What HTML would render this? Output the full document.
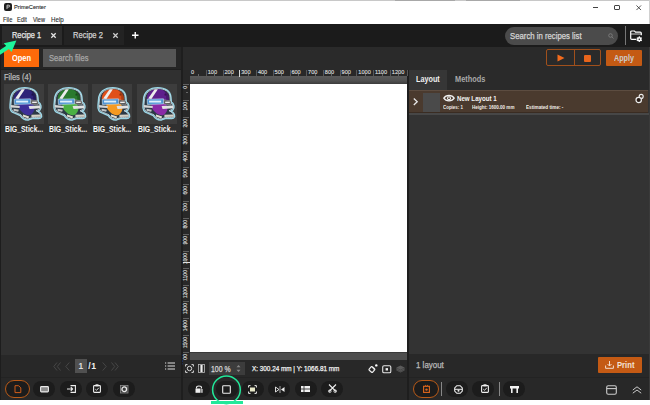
<!DOCTYPE html>
<html><head><meta charset="utf-8">
<style>
*{margin:0;padding:0;box-sizing:border-box}
html,body{width:650px;height:405px;overflow:hidden;background:#fff}
body{position:relative;font-family:"Liberation Sans",sans-serif;color:#ddd}
.a{position:absolute}
.t{position:absolute;white-space:nowrap;line-height:1}
.sb{-webkit-text-stroke:0.25px currentColor}
.rl{-webkit-text-stroke:0.15px #ddd;font-size:5.6px;color:#d8d8d8;line-height:1;white-space:nowrap}
.rv{-webkit-text-stroke:0.15px #ddd;font-size:5.1px;color:#d8d8d8;line-height:1;white-space:nowrap;writing-mode:vertical-rl;transform:rotate(180deg)}
.pill{position:absolute;width:22px;height:16px;border-radius:8px;background:#1c1c1c}
.card{position:absolute;top:84.2px;width:40px;height:39.4px;background:#3d3d3d}
.cl{position:absolute;top:125.6px;font-size:8.2px;font-weight:bold;color:#f6f6f6;white-space:nowrap;line-height:1}
svg{position:absolute;overflow:visible}
</style></head><body>
<svg width="0" height="0" style="position:absolute">
<defs>
<symbol id="stk" viewBox="0 0 40 40">
<g transform="translate(2.3 0.5) scale(0.93 0.97)">
<path d="M4.5 16 C4.5 8 11 3.2 20 3.2 C28 3.2 33.5 7 34 13 L34.5 18 C37.5 20 38.5 24 36 26.5 L34 27.5 C38 29 39 33 37 34.5 C34 35.5 31 35 28 35 L24 36.5 C20 37 17 35 15 32 L9 29.5 C5 28.5 3.5 25 4 21 Z" fill="#2c3a46" stroke="#9ad6e6" stroke-width="1.5"/>
<path d="M5.6 16 C5.6 9 11.5 4.3 20 4.3 C27.5 4.3 32.8 7.5 33 13 L33.5 18.6 C36.5 20.5 37.3 24 35 25.8 L32 27 C36.5 29 37.8 32.5 36.5 33.6 C33.5 34.3 31 34 28 34 L24 35.4 C20.5 35.8 17.5 34.3 15.8 31.2 L9.5 28.6 C6 27.6 4.8 24.5 5.1 21 Z" fill="none" stroke="#e8f4f8" stroke-width="0.7"/>
<path d="M8 14.5 C8 8 13 4.8 20.5 4.8 C27 4.8 32 8.5 32 15 L31 17 L24 17 L10 16.5 Z" style="fill:var(--h)"/>
<path d="M26 5.8 C30 7.2 32 10 32 15 L31 17 L28.5 17 C29.5 13 29 9 26 5.8 Z" fill="#000" opacity="0.22"/>
<circle cx="28" cy="10.5" r="1.1" fill="#000" opacity="0.35"/>
<path d="M13 19.5 C16 18 24 18 28.5 20 C31 23 30.5 27 28.5 29 C27 32 22.5 32.5 19.5 30.5 C16.5 28.5 13 25 13 22 Z" style="fill:var(--f)"/>
<path d="M9.5 14.5 L16.5 5 L20 4.8 L13 15 Z" fill="#ececec"/>
<path d="M8.5 15.2 L26 14.8 L26.3 20 L8.7 20.6 Z" fill="#4a92d4" stroke="#d8ecf6" stroke-width="0.6"/>
<rect x="10.5" y="16.6" width="13" height="2" fill="#dff0fa"/>
<path d="M26.5 15.8 L34 17 L34 21 L26.5 20.2 Z" fill="#4a4a4a" stroke="#ddd" stroke-width="0.4"/>
<rect x="27.8" y="17.6" width="5" height="1.6" fill="#eee"/>
<path d="M24 22.2 L36 21.6 L36.8 24.6 L25 25.2 Z" fill="#e2e2e2"/>
<path d="M5 21.2 L14.5 22.2 L14.3 24.2 L5 23.6 Z" fill="#d6d6d6"/>
<path d="M7.8 25 L13.5 26 L12.8 28 L7.8 27 Z" fill="#c4c4c4"/>
<path d="M18 30.8 L24.5 33 L23.8 35 L17.8 33 Z" fill="#e2ddd0"/>
<path d="M27 31.2 L36.8 31 L36.8 33.2 L27 33.6 Z" fill="#d4d0c4"/>
</g>
</symbol>
</defs>
</svg>

<!-- title bar -->
<div class="a" style="left:0;top:0;width:650px;height:24px;background:#fff;border-top:1px solid #c8c8c8"></div>
<div class="a" style="left:395px;top:0;width:60px;height:1px;background:#a8a8a8"></div>
<div class="a" style="left:466px;top:0;width:54px;height:1px;background:#a8a8a8"></div>
<div class="a" style="left:4px;top:3px;width:8px;height:8px;background:#1e1e1e;border-radius:2px"></div>
<svg style="left:5px;top:4px" width="6" height="6" viewBox="0 0 6 6"><path d="M2 5 L2 1.2 L4 1.2 C5 1.2 5 3 4 3 L2 3" fill="none" stroke="#ddd" stroke-width="0.8"/></svg>
<div class="t" id="title" style="left:13.55px;top:4.8px;font-size:5.9px;color:#1a1a1a;-webkit-text-stroke:0.1px #1a1a1a;transform:scaleX(0.965);transform-origin:0 0">PrimeCenter</div>
<div class="t" id="mf" style="left:2.84px;top:16.5px;font-size:6.3px;color:#2a2a2a;-webkit-text-stroke:0.1px #2a2a2a;transform:scaleX(0.925);transform-origin:0 0">File</div>
<div class="t" id="me" style="left:17.05px;top:16.5px;font-size:6.3px;color:#2a2a2a;-webkit-text-stroke:0.1px #2a2a2a;transform:scaleX(0.915);transform-origin:0 0">Edit</div>
<div class="t" id="mv" style="left:33.00px;top:16.5px;font-size:6.3px;color:#2a2a2a;-webkit-text-stroke:0.1px #2a2a2a;transform:scaleX(0.881);transform-origin:0 0">View</div>
<div class="t" id="mh" style="left:50.52px;top:16.5px;font-size:6.3px;color:#2a2a2a;-webkit-text-stroke:0.1px #2a2a2a;transform:scaleX(0.983);transform-origin:0 0">Help</div>
<div class="a" style="left:593px;top:7px;width:5px;height:1px;background:#444"></div>
<div class="a" style="left:614px;top:5px;width:6px;height:5px;border:1px solid #444;border-radius:1px"></div>
<svg style="left:636px;top:4.5px" width="5.5" height="5.5" viewBox="0 0 6 6"><path d="M0.5 0.5 L5.5 5.5 M5.5 0.5 L0.5 5.5" stroke="#333" stroke-width="0.9"/></svg>
<div class="a" style="left:649px;top:0;width:1px;height:24px;background:#d0d0d0"></div>

<!-- dark main -->
<div class="a" style="left:0;top:24px;width:650px;height:376px;background:#1b1b1b"></div>

<!-- tabs -->
<div class="a" style="left:2px;top:26.2px;width:60px;height:18.6px;background:#2c2c2c"></div>
<div class="t sb" id="tab1" style="left:12.12px;top:32px;font-size:8.2px;color:#e8e8e8;transform:scaleX(0.898);transform-origin:0 0">Recipe 1</div>
<svg style="left:50.5px;top:33px" width="5" height="5" viewBox="0 0 5 5"><path d="M0.3 0.3 L4.7 4.7 M4.7 0.3 L0.3 4.7" stroke="#e6e6e6" stroke-width="1.25"/></svg>
<div class="a" style="left:64px;top:26.2px;width:60px;height:18.6px;background:#232323"></div>
<div class="t sb" id="tab2" style="left:73.41px;top:32px;font-size:8.2px;color:#cfcfcf;transform:scaleX(0.924);transform-origin:0 0">Recipe 2</div>
<svg style="left:112.5px;top:33px" width="5" height="5" viewBox="0 0 5 5"><path d="M0.3 0.3 L4.7 4.7 M4.7 0.3 L0.3 4.7" stroke="#d0d0d0" stroke-width="1.25"/></svg>
<svg style="left:132.2px;top:32px" width="6.5" height="6.5" viewBox="0 0 6.5 6.5"><path d="M3.25 0 V6.5 M0 3.25 H6.5" stroke="#fff" stroke-width="1.4"/></svg>

<div class="a" style="left:505px;top:27px;width:113px;height:18px;background:#4b4b4b;border-radius:9px"></div>
<div class="t sb" id="srch" style="left:510.36px;top:31.5px;font-size:8.3px;color:#d5d5d5;transform:scaleX(0.935);transform-origin:0 0">Search in recipes list</div>
<svg style="left:608px;top:33px" width="6" height="6" viewBox="0 0 6 6"><circle cx="2.5" cy="2.5" r="1.8" fill="none" stroke="#888" stroke-width="0.7"/><path d="M3.8 3.8 L5.5 5.5" stroke="#888" stroke-width="0.7"/></svg>
<div class="a" style="left:624.5px;top:26px;width:1px;height:19px;background:#777"></div>
<svg style="left:629px;top:30px" width="14" height="12" viewBox="0 0 14 12"><path d="M7.5 9.3 H2.8 Q1.7 9.3 1.7 8.2 V2 Q1.7 1 2.7 1 H5.5 L6.5 2.1 H11.2 Q12.3 2.1 12.3 3.2 V5.2" fill="none" stroke="#fff" stroke-width="1.2"/><path d="M2 4 H12" stroke="#fff" stroke-width="0.8"/><circle cx="10.3" cy="9.2" r="2.2" fill="#fff"/><path d="M10.3 6.3 V12.1 M7.8 7.75 L12.8 10.65 M7.8 10.65 L12.8 7.75" stroke="#fff" stroke-width="1.1"/><circle cx="10.3" cy="9.2" r="0.8" fill="#1b1b1b"/></svg>

<!-- left panel -->
<div class="a" style="left:0;top:46.5px;width:1px;height:353.5px;background:#1d1d1d"></div>
<div class="a" style="left:1px;top:46.5px;width:179.5px;height:23.5px;background:#252525;border-bottom:1px solid #1f1f1f"></div>
<div class="a" style="left:4px;top:49px;width:35px;height:18px;background:#fd6a0a"></div>
<div class="t" id="open" style="left:11.77px;top:55px;font-size:8.2px;font-weight:bold;color:#fff;transform:scaleX(0.911);transform-origin:0 0">Open</div>
<div class="a" style="left:43px;top:49px;width:133px;height:18px;background:#555"></div>
<div class="t sb" id="sfiles" style="left:48.76px;top:55.3px;font-size:8.2px;color:#a8a8a8;transform:scaleX(0.921);transform-origin:0 0">Search files</div>
<div class="a" style="left:1px;top:70px;width:179.5px;height:285px;background:#303030"></div>
<div class="t sb" id="files" style="left:4.01px;top:74px;font-size:8.2px;color:#b8b8b8;transform:scaleX(0.918);transform-origin:0 0">Files (4)</div>

<div class="card" style="left:4px"></div>
<svg style="left:4px;top:84px;--h:#2e2378;--f:#3d2f98" width="40" height="40"><use href="#stk"/></svg>
<div class="cl" id="c1" style="left:5px;transform:scaleX(0.839);transform-origin:0 0">BIG_Stick...</div>
<div class="card" style="left:48.2px"></div>
<svg style="left:48.2px;top:84px;--h:#2a7a2e;--f:#4bb043" width="40" height="40"><use href="#stk"/></svg>
<div class="cl" id="c2" style="left:49.2px;transform:scaleX(0.839);transform-origin:0 0">BIG_Stick...</div>
<div class="card" style="left:92.4px"></div>
<svg style="left:92.4px;top:84px;--h:#e0501a;--f:#f59a22" width="40" height="40"><use href="#stk"/></svg>
<div class="cl" id="c3" style="left:93.4px;transform:scaleX(0.839);transform-origin:0 0">BIG_Stick...</div>
<div class="card" style="left:136.6px"></div>
<svg style="left:136.6px;top:84px;--h:#5e1f8c;--f:#8a2aa6" width="40" height="40"><use href="#stk"/></svg>
<div class="cl" id="c4" style="left:137.6px;transform:scaleX(0.839);transform-origin:0 0">BIG_Stick...</div>

<div class="a" style="left:1px;top:355px;width:179.5px;height:21.5px;background:#282828"></div>
<svg style="left:53px;top:361.8px" width="8" height="9" viewBox="0 0 8 9"><path d="M4 0.5 L0.8 4.5 L4 8.5 M7.5 0.5 L4.3 4.5 L7.5 8.5" fill="none" stroke="#4a4a4a" stroke-width="0.9"/></svg>
<svg style="left:65.3px;top:361.8px" width="5" height="9" viewBox="0 0 5 9"><path d="M4.3 0.5 L0.8 4.5 L4.3 8.5" fill="none" stroke="#4a4a4a" stroke-width="0.9"/></svg>
<div class="a" style="left:75.2px;top:359px;width:12.3px;height:13.7px;background:#505050"></div>
<div class="t" style="left:78.6px;top:362.3px;font-size:8.3px;color:#dedede;font-weight:bold">1</div>
<div class="t" style="left:88.3px;top:362px;font-size:8.6px;color:#f0f0f0;font-weight:bold;letter-spacing:0.6px">/1</div>
<svg style="left:102px;top:361.8px" width="5" height="9" viewBox="0 0 5 9"><path d="M0.7 0.5 L4.2 4.5 L0.7 8.5" fill="none" stroke="#4a4a4a" stroke-width="0.9"/></svg>
<svg style="left:111.3px;top:361.8px" width="8" height="9" viewBox="0 0 8 9"><path d="M0.5 0.5 L3.7 4.5 L0.5 8.5 M4 0.5 L7.2 4.5 L4 8.5" fill="none" stroke="#4a4a4a" stroke-width="0.9"/></svg>
<svg style="left:165px;top:362px" width="10" height="8" viewBox="0 0 10 8"><path d="M0 1 H1.2 M2.6 1 H10 M0 4 H1.2 M2.6 4 H10 M0 7 H1.2 M2.6 7 H10" stroke="#e0e0e0" stroke-width="1"/></svg>

<div class="a" style="left:1px;top:376.5px;width:179.5px;height:23.5px;background:#282828;border-top:1px solid #232323"></div>
<!-- left bottom toolbar pills -->
<div class="pill" style="left:4.8px;top:380.3px;width:25.3px;height:17.7px;border-radius:9px;border:1.8px solid #b85a18;background:#1c1c1c"></div>
<svg style="left:14px;top:385px" width="8" height="8" viewBox="0 0 8 8"><path d="M1 0.7 H4.6 L6.8 2.9 V7.6 H1 Z" fill="none" stroke="#d8601a" stroke-width="0.95"/></svg>
<div class="pill" style="left:33.4px;top:381px"></div>
<svg style="left:40px;top:385.8px" width="9" height="6.5" viewBox="0 0 9 6.5"><rect x="0.6" y="0.6" width="7.8" height="5.3" rx="0.8" fill="#8a8a8a" stroke="#eaeaea" stroke-width="1.1"/></svg>
<div class="pill" style="left:59.6px;top:381px"></div>
<svg style="left:67px;top:385px" width="9" height="8" viewBox="0 0 9 8"><path d="M3.5 0.6 H8.4 V7.4 H3.5" fill="none" stroke="#eee" stroke-width="1.1"/><path d="M0 4 H5.5 M3.8 2.2 L5.6 4 L3.8 5.8" fill="none" stroke="#eee" stroke-width="1.1"/></svg>
<div class="pill" style="left:86px;top:381px"></div>
<svg style="left:93px;top:384px" width="8" height="9" viewBox="0 0 8 9"><rect x="0.6" y="1.6" width="6.8" height="6.8" fill="none" stroke="#eee" stroke-width="1.1" rx="0.8"/><rect x="2.5" y="0.3" width="3" height="2" fill="#eee"/><path d="M2.3 5.2 L3.6 6.3 L5.8 3.8" fill="none" stroke="#eee" stroke-width="0.9"/></svg>
<div class="pill" style="left:112.6px;top:381px"></div>
<svg style="left:119.8px;top:384.8px" width="8.5" height="8.5" viewBox="0 0 8.5 8.5"><rect x="0.5" y="0.5" width="7.5" height="7.5" fill="#3a3a3a" stroke="#8a8a8a" stroke-width="0.8"/><circle cx="4.25" cy="4.25" r="2.3" fill="none" stroke="#e8e8e8" stroke-width="1.3"/></svg>

<!-- splitters -->
<div class="a" style="left:180.5px;top:46.5px;width:2px;height:353.5px;background:#1e1e1e"></div>
<div class="a" style="left:407px;top:69.5px;width:2px;height:330.5px;background:#1e1e1e"></div>

<!-- center -->
<div class="a" style="left:182.5px;top:46.5px;width:466px;height:23px;background:#2a2a2a"></div>
<div class="a" style="left:182.5px;top:69.5px;width:224.5px;height:6.5px;background:#282828"></div>
<div class="a" style="left:182.5px;top:76px;width:7px;height:283.5px;background:#282828"></div>
<div class="a" style="left:189.5px;top:76px;width:217.5px;height:283.5px;background:#525252"></div>
<div class="a" style="left:189.5px;top:76px;width:217.5px;height:8px;background:linear-gradient(#5a5a5a,#505050 60%,#3c3c3c)"></div>
<div class="a" style="left:189.5px;top:84px;width:217.5px;height:268px;background:#fff"></div>
<div class="a" style="left:189.5px;top:352px;width:217.5px;height:7.5px;background:#4e4e4e;border-top:1.3px solid #3a3a3a"></div>
<div class="a" style="left:205.8px;top:70px;width:1px;height:6px;background:#585858"></div>
<div class="a" style="left:222.6px;top:70px;width:1px;height:6px;background:#585858"></div>
<div class="a" style="left:239.3px;top:70px;width:1px;height:6px;background:#585858"></div>
<div class="a" style="left:256.0px;top:70px;width:1px;height:6px;background:#585858"></div>
<div class="a" style="left:272.8px;top:70px;width:1px;height:6px;background:#585858"></div>
<div class="a" style="left:289.5px;top:70px;width:1px;height:6px;background:#585858"></div>
<div class="a" style="left:306.2px;top:70px;width:1px;height:6px;background:#585858"></div>
<div class="a" style="left:322.9px;top:70px;width:1px;height:6px;background:#585858"></div>
<div class="a" style="left:339.7px;top:70px;width:1px;height:6px;background:#585858"></div>
<div class="a" style="left:356.4px;top:70px;width:1px;height:6px;background:#585858"></div>
<div class="a" style="left:373.1px;top:70px;width:1px;height:6px;background:#585858"></div>
<div class="a" style="left:389.9px;top:70px;width:1px;height:6px;background:#585858"></div>
<div class="a" style="left:406.6px;top:70px;width:1px;height:6px;background:#585858"></div>
<div class="a" style="left:197.5px;top:74px;width:1px;height:2px;background:#666"></div>
<div class="a rl" style="left:191.0px;top:70px">0</div>
<div class="a" style="left:214.2px;top:74px;width:1px;height:2px;background:#666"></div>
<div class="a rl" style="left:207.7px;top:70px">100</div>
<div class="a" style="left:230.9px;top:74px;width:1px;height:2px;background:#666"></div>
<div class="a rl" style="left:224.5px;top:70px">200</div>
<div class="a" style="left:247.7px;top:74px;width:1px;height:2px;background:#666"></div>
<div class="a rl" style="left:241.2px;top:70px">300</div>
<div class="a" style="left:264.4px;top:74px;width:1px;height:2px;background:#666"></div>
<div class="a rl" style="left:257.9px;top:70px">400</div>
<div class="a" style="left:281.1px;top:74px;width:1px;height:2px;background:#666"></div>
<div class="a rl" style="left:274.6px;top:70px">500</div>
<div class="a" style="left:297.8px;top:74px;width:1px;height:2px;background:#666"></div>
<div class="a rl" style="left:291.4px;top:70px">600</div>
<div class="a" style="left:314.6px;top:74px;width:1px;height:2px;background:#666"></div>
<div class="a rl" style="left:308.1px;top:70px">700</div>
<div class="a" style="left:331.3px;top:74px;width:1px;height:2px;background:#666"></div>
<div class="a rl" style="left:324.8px;top:70px">800</div>
<div class="a" style="left:348.0px;top:74px;width:1px;height:2px;background:#666"></div>
<div class="a rl" style="left:341.6px;top:70px">900</div>
<div class="a" style="left:364.8px;top:74px;width:1px;height:2px;background:#666"></div>
<div class="a rl" style="left:358.3px;top:70px">1000</div>
<div class="a" style="left:381.5px;top:74px;width:1px;height:2px;background:#666"></div>
<div class="a rl" style="left:375.0px;top:70px">1100</div>
<div class="a" style="left:398.2px;top:74px;width:1px;height:2px;background:#666"></div>
<div class="a rl" style="left:391.8px;top:70px">1200</div>
<div class="a" style="left:182.5px;top:83.5px;width:6px;height:1px;background:#606060"></div>
<div class="a" style="left:186px;top:91.9px;width:2px;height:1px;background:#666"></div>
<div class="a rv" style="left:183px;top:85.6px">0</div>
<div class="a" style="left:182.5px;top:100.2px;width:6px;height:1px;background:#606060"></div>
<div class="a" style="left:186px;top:108.6px;width:2px;height:1px;background:#666"></div>
<div class="a rv" style="left:183px;top:102.3px">100</div>
<div class="a" style="left:182.5px;top:117.0px;width:6px;height:1px;background:#606060"></div>
<div class="a" style="left:186px;top:125.4px;width:2px;height:1px;background:#666"></div>
<div class="a rv" style="left:183px;top:119.1px">200</div>
<div class="a" style="left:182.5px;top:133.8px;width:6px;height:1px;background:#606060"></div>
<div class="a" style="left:186px;top:142.1px;width:2px;height:1px;background:#666"></div>
<div class="a rv" style="left:183px;top:135.8px">300</div>
<div class="a" style="left:182.5px;top:150.5px;width:6px;height:1px;background:#606060"></div>
<div class="a" style="left:186px;top:158.9px;width:2px;height:1px;background:#666"></div>
<div class="a rv" style="left:183px;top:152.6px">400</div>
<div class="a" style="left:182.5px;top:167.2px;width:6px;height:1px;background:#606060"></div>
<div class="a" style="left:186px;top:175.6px;width:2px;height:1px;background:#666"></div>
<div class="a rv" style="left:183px;top:169.3px">500</div>
<div class="a" style="left:182.5px;top:184.0px;width:6px;height:1px;background:#606060"></div>
<div class="a" style="left:186px;top:192.4px;width:2px;height:1px;background:#666"></div>
<div class="a rv" style="left:183px;top:186.1px">600</div>
<div class="a" style="left:182.5px;top:200.8px;width:6px;height:1px;background:#606060"></div>
<div class="a" style="left:186px;top:209.1px;width:2px;height:1px;background:#666"></div>
<div class="a rv" style="left:183px;top:202.8px">700</div>
<div class="a" style="left:182.5px;top:217.5px;width:6px;height:1px;background:#606060"></div>
<div class="a" style="left:186px;top:225.9px;width:2px;height:1px;background:#666"></div>
<div class="a rv" style="left:183px;top:219.6px">800</div>
<div class="a" style="left:182.5px;top:234.2px;width:6px;height:1px;background:#606060"></div>
<div class="a" style="left:186px;top:242.6px;width:2px;height:1px;background:#666"></div>
<div class="a rv" style="left:183px;top:236.3px">900</div>
<div class="a" style="left:182.5px;top:251.0px;width:6px;height:1px;background:#606060"></div>
<div class="a" style="left:186px;top:259.4px;width:2px;height:1px;background:#666"></div>
<div class="a rv" style="left:183px;top:253.1px">1000</div>
<div class="a" style="left:182.5px;top:267.8px;width:6px;height:1px;background:#606060"></div>
<div class="a" style="left:186px;top:276.1px;width:2px;height:1px;background:#666"></div>
<div class="a rv" style="left:183px;top:269.9px">1100</div>
<div class="a" style="left:182.5px;top:284.5px;width:6px;height:1px;background:#606060"></div>
<div class="a" style="left:186px;top:292.9px;width:2px;height:1px;background:#666"></div>
<div class="a rv" style="left:183px;top:286.6px">1200</div>
<div class="a" style="left:182.5px;top:301.2px;width:6px;height:1px;background:#606060"></div>
<div class="a" style="left:186px;top:309.6px;width:2px;height:1px;background:#666"></div>
<div class="a rv" style="left:183px;top:303.4px">1300</div>
<div class="a" style="left:182.5px;top:318.0px;width:6px;height:1px;background:#606060"></div>
<div class="a" style="left:186px;top:326.4px;width:2px;height:1px;background:#666"></div>
<div class="a rv" style="left:183px;top:320.1px">1400</div>
<div class="a" style="left:182.5px;top:334.8px;width:6px;height:1px;background:#606060"></div>
<div class="a" style="left:186px;top:343.1px;width:2px;height:1px;background:#666"></div>
<div class="a rv" style="left:183px;top:336.9px">1500</div>
<div class="a" style="left:182.5px;top:351.5px;width:6px;height:1px;background:#606060"></div>
<div class="a" style="left:186px;top:359.9px;width:2px;height:1px;background:#666"></div>
<div class="a rv" style="left:183px;top:353.6px">1600</div>
<div class="a" style="left:182.5px;top:262px;width:7px;height:1px;background:#e0e0e0"></div>
<div class="a" style="left:239px;top:69.5px;width:1px;height:7px;background:#d8d8d8"></div>
<div class="a" style="left:182.5px;top:359.5px;width:224.5px;height:17px;background:#282828"></div>
<svg style="left:185px;top:364px" width="9" height="9" viewBox="0 0 9 9"><path d="M0.6 2.5 V0.6 H2.5 M6.5 0.6 H8.4 V2.5 M8.4 6.5 V8.4 H6.5 M2.5 8.4 H0.6 V6.5" fill="none" stroke="#ddd" stroke-width="1"/><circle cx="4.5" cy="4.5" r="2.2" fill="none" stroke="#ddd" stroke-width="1"/></svg>
<svg style="left:198px;top:364px" width="7" height="9" viewBox="0 0 7 9"><rect x="0.5" y="0.5" width="6" height="8" fill="none" stroke="#bbb" stroke-width="0.8"/><rect x="2.4" y="1" width="2.2" height="7" fill="#eee"/></svg>
<div class="a" style="left:208.6px;top:362px;width:36.4px;height:12.5px;background:#3c3c3c"></div>
<div class="t sb" id="zoom" style="left:210.57px;top:364.5px;font-size:8.3px;color:#d8d8d8;transform:scaleX(0.834);transform-origin:0 0">100 %</div>
<svg style="left:236px;top:364px" width="5" height="9" viewBox="0 0 5 9"><path d="M0.5 3.3 L2.5 1 L4.5 3.3 Z M0.5 5.7 L2.5 8 L4.5 5.7 Z" fill="#888"/></svg>
<div class="t sb" id="coord" style="left:251.70px;top:364.8px;font-size:7.4px;color:#f4f4f4;transform:scaleX(0.860);transform-origin:0 0">X: 300.24 mm | Y: 1066.81 mm</div>
<svg style="left:368px;top:364px" width="10" height="9" viewBox="0 0 10 9"><rect x="1.6" y="3.2" width="4.6" height="4.6" rx="0.8" transform="rotate(40 3.9 5.5)" fill="none" stroke="#eee" stroke-width="1.2"/><path d="M3.2 2.2 L6.6 6" stroke="#eee" stroke-width="1"/><circle cx="8.3" cy="1.4" r="1.2" fill="#fff"/></svg>
<svg style="left:382px;top:364.5px" width="9.5" height="8.5" viewBox="0 0 9.5 8.5"><rect x="0.7" y="0.7" width="8.1" height="7.1" rx="1.3" fill="none" stroke="#e6e6e6" stroke-width="1.1"/><rect x="3.6" y="3.1" width="2.4" height="2.4" fill="#eee"/></svg>
<svg style="left:396px;top:365px" width="9" height="8" viewBox="0 0 9 8"><path d="M4.5 0.5 L8.5 2.5 L8.5 5.5 L4.5 7.5 L0.5 5.5 L0.5 2.5 Z" fill="#5a5a5a"/><path d="M0.5 3 L4.5 5 L8.5 3 M0.5 4.6 L4.5 6.6 L8.5 4.6" fill="none" stroke="#3a3a3a" stroke-width="0.6"/></svg>

<div class="a" style="left:182.5px;top:376.5px;width:224.5px;height:23.5px;background:#282828;border-top:1px solid #232323"></div>
<div class="pill" style="left:188px;top:381px"></div>
<svg style="left:195px;top:385px" width="8" height="8" viewBox="0 0 8 8"><path d="M1.5 3.5 V2.5 C1.5 0.5 6.5 0.5 6.5 2.5 V3.5" fill="none" stroke="#eee" stroke-width="1.1"/><rect x="0.5" y="3.5" width="5" height="4.3" fill="#eee"/><rect x="6" y="4" width="1.8" height="3.8" fill="#aaa"/></svg>
<div class="pill" style="left:215.5px;top:381px"></div>
<svg style="left:222px;top:385px" width="9" height="9" viewBox="0 0 9 9"><rect x="0.7" y="0.7" width="7.6" height="7.6" rx="0.8" fill="none" stroke="#eee" stroke-width="1.1"/></svg>
<div class="pill" style="left:241.5px;top:381px"></div>
<svg style="left:248px;top:385px" width="9" height="9" viewBox="0 0 9 9"><path d="M0.6 2.5 V0.6 H2.5 M6.5 0.6 H8.4 V2.5 M8.4 6.5 V8.4 H6.5 M2.5 8.4 H0.6 V6.5" fill="none" stroke="#eee" stroke-width="1"/><rect x="2" y="2.5" width="5" height="4" fill="#e8e8c8"/></svg>
<div class="pill" style="left:268.3px;top:381px"></div>
<svg style="left:274.5px;top:385.5px" width="10" height="7" viewBox="0 0 10 7"><path d="M0.5 1 L4 3.5 L0.5 6 Z" fill="none" stroke="#eee" stroke-width="0.9"/><path d="M9.5 1 L6 3.5 L9.5 6 Z" fill="#eee"/><path d="M5 0 V7" stroke="#ccc" stroke-width="0.8"/></svg>
<div class="pill" style="left:294.5px;top:381px"></div>
<svg style="left:301px;top:386px" width="9" height="6" viewBox="0 0 9 6"><rect x="0" y="0" width="9" height="6" fill="#f0f0f0"/><path d="M3 0 V6 M0 3 H9" stroke="#333" stroke-width="0.9"/></svg>
<div class="pill" style="left:321px;top:381px"></div>
<svg style="left:328px;top:384px" width="9" height="9" viewBox="0 0 9 9"><path d="M1 0.5 L8 7.5 M8 0.5 L1 7.5" stroke="#eee" stroke-width="1.1"/><circle cx="1.8" cy="7.2" r="1.3" fill="none" stroke="#eee" stroke-width="0.8"/><circle cx="7.2" cy="7.2" r="1.3" fill="none" stroke="#eee" stroke-width="0.8"/></svg>

<!-- right panel -->
<div class="a" style="left:409px;top:46.5px;width:239.5px;height:23px;background:#2a2a2a"></div>
<div class="a" style="left:546px;top:48.7px;width:54.7px;height:17.8px;border:1px solid #a0501c;border-radius:2px"></div>
<div class="a" style="left:573.5px;top:48.7px;width:1px;height:17.8px;background:#a0501c"></div>
<svg style="left:557px;top:54px" width="8" height="8" viewBox="0 0 8 8"><path d="M0.5 0.5 L7.5 4 L0.5 7.5 Z" fill="#f26b1d"/></svg>
<div class="a" style="left:584px;top:55px;width:6.5px;height:6.5px;background:#e8651c;border-radius:1px"></div>
<div class="a" style="left:606px;top:50px;width:36.2px;height:15.7px;background:#c45a14;border-radius:1px"></div>
<div class="t" id="apply" style="left:613.89px;top:54.8px;font-size:8.2px;font-weight:bold;color:#cccccc;transform:scaleX(0.881);transform-origin:0 0">Apply</div>

<div class="a" style="left:409px;top:69.5px;width:239.5px;height:284px;background:#333"></div>
<div class="a" style="left:409px;top:113px;width:239.5px;height:1.6px;background:#474747"></div>
<div class="a" style="left:409px;top:69.5px;width:239.5px;height:20.7px;background:#2a2a2a"></div>
<div class="a" style="left:409px;top:70px;width:38.3px;height:20.2px;background:#363636"></div>
<div class="t" id="lay" style="left:416.25px;top:76px;font-size:8.2px;font-weight:bold;color:#f0f0f0;transform:scaleX(0.885);transform-origin:0 0">Layout</div>
<div class="t" id="meth" style="left:454.54px;top:76px;font-size:8.2px;font-weight:bold;color:#a8a8a8;transform:scaleX(0.901);transform-origin:0 0">Methods</div>
<div class="a" style="left:409px;top:90.2px;width:239.3px;height:22.8px;background:#4a3a2e;border-top:1px solid #5c4c40;border-bottom:1.2px solid #3a2c22"></div>
<svg style="left:412.6px;top:97.8px" width="5" height="7.5" viewBox="0 0 5 7.5"><path d="M0.8 0.6 L4.2 3.75 L0.8 6.9" fill="none" stroke="#e8e8e8" stroke-width="1.3"/></svg>
<div class="a" style="left:423px;top:92.5px;width:17px;height:19px;background:#4a4a4a"></div>
<svg style="left:443px;top:94.2px" width="12" height="8.4" viewBox="0 0 12 8.4"><path d="M0.8 4.2 C3 0.6 9 0.6 11.2 4.2 C9 7.8 3 7.8 0.8 4.2 Z" fill="none" stroke="#f0f0f0" stroke-width="1.3"/><circle cx="6" cy="4.2" r="2" fill="#f0f0f0"/><circle cx="6" cy="4.2" r="0.9" fill="#4b3b2f"/></svg>
<div class="t" id="nl" style="left:456.61px;top:95px;font-size:7.6px;font-weight:bold;color:#f5f5f5;transform:scaleX(0.811);transform-origin:0 0">New Layout 1</div>
<div class="t" id="cop" style="left:442.56px;top:105.3px;font-size:5.6px;font-weight:bold;color:#f2eee8;transform:scaleX(0.791);transform-origin:0 0">Copies: 1</div>
<div class="t" id="hgt" style="left:471.72px;top:105.3px;font-size:5.6px;font-weight:bold;color:#f2eee8;transform:scaleX(0.807);transform-origin:0 0">Height: 1600.00 mm</div>
<div class="t" id="est" style="left:526.11px;top:105.3px;font-size:5.6px;font-weight:bold;color:#f2eee8;transform:scaleX(0.830);transform-origin:0 0">Estimated time: -</div>
<svg style="left:634px;top:92px" width="11" height="12" viewBox="0 0 11 12"><circle cx="7.2" cy="4.4" r="2" fill="none" stroke="#eee" stroke-width="1.1"/><circle cx="4.7" cy="8" r="2.7" fill="#2a1e18" stroke="#eee" stroke-width="1.2"/></svg>

<div class="a" style="left:409px;top:353.5px;width:239.5px;height:23px;background:#282828"></div>
<div class="t sb" id="lc" style="left:415.50px;top:362px;font-size:8.2px;color:#b8b8b8;transform:scaleX(0.970);transform-origin:0 0">1 layout</div>
<div class="a" style="left:597.8px;top:357.4px;width:43.9px;height:15.7px;background:#c45a14;border-radius:1px"></div>
<svg style="left:605px;top:361px" width="9" height="8" viewBox="0 0 9 8"><path d="M4.5 0 V5 M2.5 3 L4.5 5 L6.5 3 M0.6 4.5 V7.3 H8.4 V4.5" fill="none" stroke="#f3dccb" stroke-width="1"/></svg>
<div class="t" id="print" style="left:616.52px;top:362px;font-size:8.2px;font-weight:bold;color:#f3e3d6;transform:scaleX(0.938);transform-origin:0 0">Print</div>

<div class="a" style="left:409px;top:376.5px;width:239.5px;height:23.5px;background:#282828;border-top:1px solid #232323"></div>
<div class="pill" style="left:413.4px;top:380.3px;width:25.6px;height:17.7px;border-radius:9px;border:1.8px solid #b85a18;background:#1c1c1c"></div>
<svg style="left:422.5px;top:384.5px" width="7" height="8" viewBox="0 0 7 8"><rect x="0.6" y="1.3" width="5.8" height="6.1" fill="none" stroke="#e0661c" stroke-width="1.1"/><circle cx="3.5" cy="4.6" r="1.2" fill="#e0661c"/><path d="M2 0 L3.5 1.3 L5 0" stroke="#e0661c" stroke-width="0.8" fill="none"/></svg>
<div class="a" style="left:441px;top:382px;width:1px;height:14px;background:#888"></div>
<div class="pill" style="left:446px;top:381px"></div>
<svg style="left:453.5px;top:384.5px" width="9" height="9" viewBox="0 0 9 9"><path d="M2.8 0.7 H6.2 L8.3 3 V6 L6.2 8.3 H2.8 L0.7 6 V3 Z" fill="none" stroke="#eee" stroke-width="1.1"/><path d="M0.7 4.3 H8.3" stroke="#eee" stroke-width="1"/><circle cx="4.5" cy="5.8" r="1" fill="#eee"/></svg>
<div class="pill" style="left:472px;top:381px"></div>
<svg style="left:481px;top:384px" width="8" height="9" viewBox="0 0 8 9"><rect x="0.6" y="1.6" width="6.8" height="6.8" fill="none" stroke="#eee" stroke-width="1.1" rx="0.8"/><rect x="2.5" y="0.3" width="3" height="2" fill="#eee"/><path d="M2.3 5.2 L3.6 6.3 L5.8 3.8" fill="none" stroke="#eee" stroke-width="0.9"/></svg>
<div class="a" style="left:498.5px;top:382px;width:1px;height:14px;background:#888"></div>
<div class="pill" style="left:503.3px;top:381px"></div>
<svg style="left:510px;top:385.5px" width="9" height="7" viewBox="0 0 9 7"><rect x="0" y="0" width="9" height="2.5" fill="#f0f0f0"/><rect x="1" y="2" width="1.6" height="5" fill="#f0f0f0"/><rect x="6.4" y="2" width="1.6" height="5" fill="#f0f0f0"/></svg>
<svg style="left:606px;top:384.5px" width="11" height="10" viewBox="0 0 11 10"><rect x="0.7" y="0.7" width="9.6" height="8.6" rx="1.5" fill="none" stroke="#ccc" stroke-width="1.1"/><path d="M0.7 3.6 H10.3" stroke="#ccc" stroke-width="1.1"/></svg>
<svg style="left:632px;top:386px" width="10" height="8" viewBox="0 0 10 8"><path d="M0.8 4 L5 0.8 L9.2 4 M0.8 7.2 L5 4 L9.2 7.2" fill="none" stroke="#ccc" stroke-width="1"/></svg>

<div class="a" style="left:648.5px;top:46.5px;width:1.5px;height:353.5px;background:#3a3a3a"></div>

<!-- bottom white -->
<div class="a" style="left:0;top:400px;width:650px;height:5px;background:#fff"></div>

<!-- green overlays -->
<svg style="left:0;top:36px" width="20" height="20" viewBox="0 0 20 20"><path d="M-1 17 L9 10.5" stroke="#1ef59a" stroke-width="4"/><path d="M16.4 4.6 L3.8 7.2 L11.6 16 Z" fill="#1ef59a"/></svg>
<svg style="left:210px;top:373px" width="34" height="34" viewBox="0 0 34 34"><circle cx="16.45" cy="16.8" r="13.85" fill="none" stroke="#22e89a" stroke-width="1.5"/></svg>
<div class="a" style="left:211.2px;top:400.7px;width:31.8px;height:3.2px;background:#22e89a"></div>
</body></html>
